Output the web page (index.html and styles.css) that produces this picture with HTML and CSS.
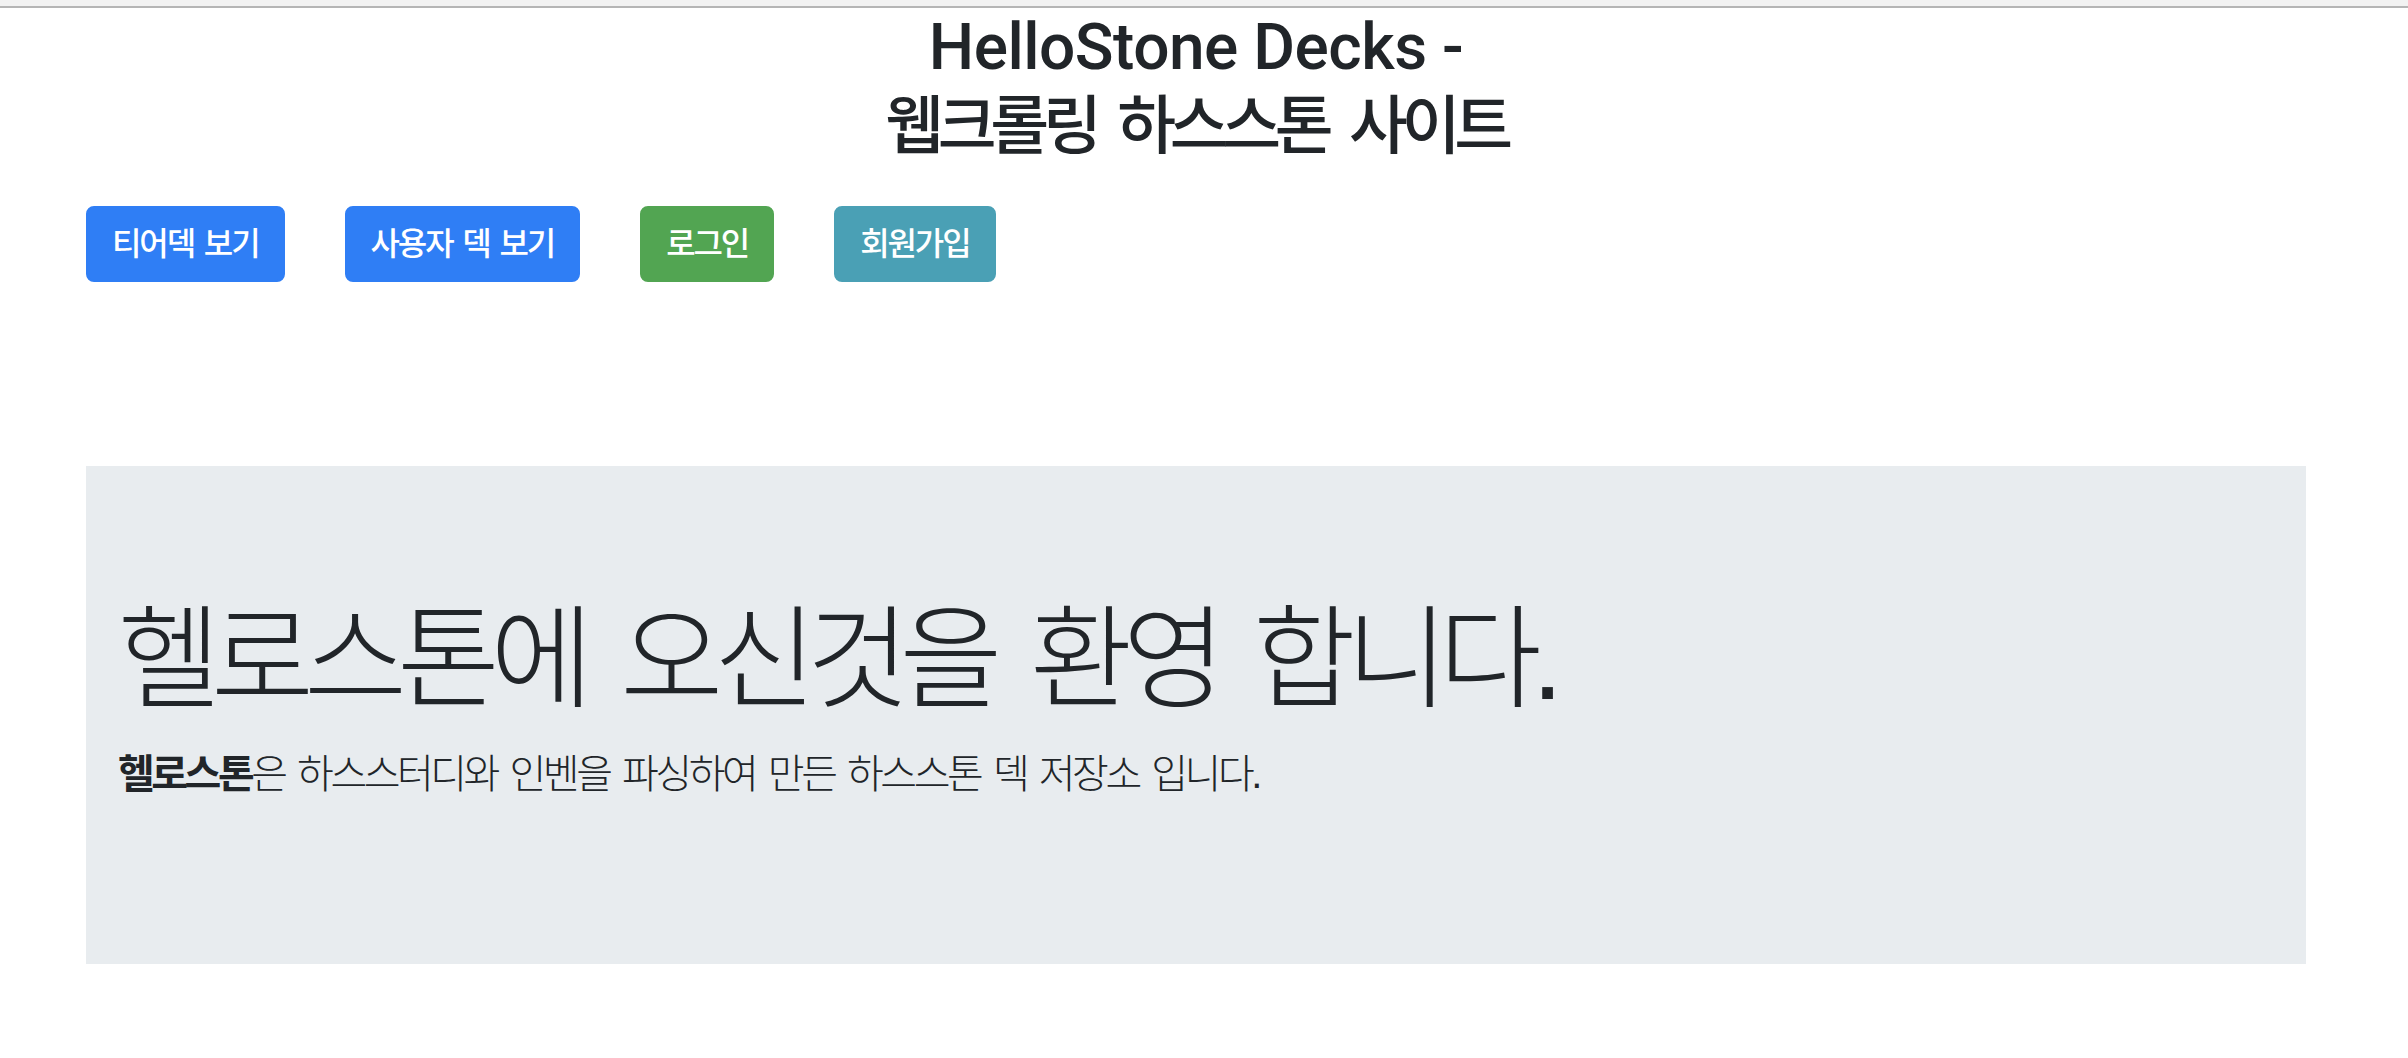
FILE: index.html
```html
<!DOCTYPE html>
<html lang="ko">
<head>
<meta charset="utf-8">
<title>HelloStone Decks</title>
<link rel="stylesheet" href="styles.css">
</head>
<body>
<div class="chrome"></div>
<main class="page">
  <h2 class="title"><span class="title-en">HelloStone Decks -</span><span class="title-ko">웹크롤링 하스스톤 사이트</span></h2>
  <nav class="actions">
    <a class="btn btn-primary" href="#">티어덱 보기</a>
    <a class="btn btn-primary" href="#">사용자 덱 보기</a>
    <a class="btn btn-success" href="#">로그인</a>
    <a class="btn btn-info" href="#">회원가입</a>
  </nav>
  <section class="jumbotron">
    <h1 class="display">헬로스톤에 오신것을 환영 합니다.</h1>
    <p class="lead"><b>헬로스톤</b>은 하스스터디와 인벤을 파싱하여 만든 하스스톤 덱 저장소 입니다.</p>
  </section>
</main>
</body>
</html>
```
FILE: styles.css
```css
html, body {
  margin: 0;
  padding: 0;
  background: #ffffff;
}
body {
  font-family: "Liberation Sans", "Noto Sans CJK KR", sans-serif;
  color: #212529;
}
.chrome {
  height: 6px;
  background: #f2f2f2;
  border-bottom: 2px solid #b5b5b5;
}
.page {
  padding: 0 102px 0 86px;
}
.title {
  margin: 0;
  padding-top: 2px;
  text-align: center;
  font-size: 64px;
}
.title-en {
  display: block;
  line-height: 76.8px;
  font-family: Roboto, "Liberation Sans", sans-serif;
  font-weight: 500;
  letter-spacing: -0.5px;
}
.title-ko {
  display: block;
  line-height: 66.8px;
  font-family: "Noto Sans CJK KR", sans-serif;
  font-weight: 500;
  letter-spacing: -6.3px;
  word-spacing: 10px;
}
.actions {
  display: flex;
  gap: 60px;
  margin-top: 52px;
}
.btn {
  display: inline-block;
  font-size: 32px;
  line-height: 48px;
  padding: 12px 24px;
  border: 2px solid transparent;
  border-radius: 8px;
  color: #ffffff;
  text-decoration: none;
  font-weight: 500;
  letter-spacing: -2.1px;
  word-spacing: 3px;
}
.btn-primary { background: #2f7ef5; border-color: #2f7ef5; }
.btn-success { background: #52a552; border-color: #52a552; }
.btn-info { background: #4aa0b5; border-color: #4aa0b5; }
.jumbotron {
  margin-top: 184px;
  background: #e8ecef;
  padding: 128px 32px;
}
.display {
  margin: 0 0 16px 0;
  font-size: 112px;
  font-weight: 300;
  line-height: 1.2;
  letter-spacing: -10px;
  word-spacing: 16px;
}
.lead {
  margin: 0 0 32px 0;
  font-size: 40px;
  font-weight: 300;
  line-height: 1.5;
  letter-spacing: -3.5px;
  word-spacing: 5px;
}
.lead b {
  font-weight: 700;
}
```
